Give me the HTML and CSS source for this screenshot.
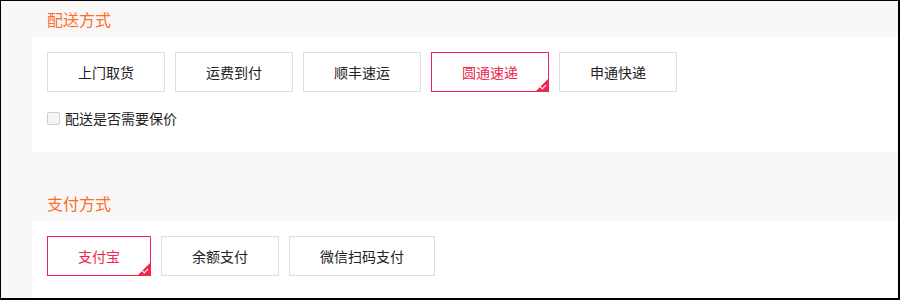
FILE: index.html
```html
<!DOCTYPE html>
<html lang="zh-CN">
<head>
  <meta charset="UTF-8">
  <title>配送与支付</title>
  <link rel="stylesheet" href="styles.css">
</head>
<body>
  <div class="page">
    <div class="section">
      <div class="section-title">配送方式</div>
      <div class="section-body">
        <div class="options">
          <div class="option">上门取货</div>
          <div class="option">运费到付</div>
          <div class="option">顺丰速运</div>
          <div class="option active">圆通速递</div>
          <div class="option">申通快递</div>
        </div>
        <label class="insure">
          <input type="checkbox">
          <span>配送是否需要保价</span>
        </label>
      </div>
    </div>

    <div class="section section-pay">
      <div class="section-title">支付方式</div>
      <div class="section-body">
        <div class="options">
          <div class="option active">支付宝</div>
          <div class="option">余额支付</div>
          <div class="option">微信扫码支付</div>
        </div>
      </div>
    </div>
  </div>
</body>
</html>
```

FILE: styles.css
```css
* {
  margin: 0;
  padding: 0;
  box-sizing: border-box;
}

html, body {
  height: 100%;
  background-color: #fff;
  font-family: "Noto Sans CJK SC", "Noto Sans", sans-serif;
  color: #333;
  overflow: hidden;
}

.page {
  width: 900px;
  height: 300px;
  border-style: solid;
  border-color: #000;
  border-width: 1px 2px 2px 1px;
  background-color: #f8f8f8;
  overflow: hidden;
}

.section-pay {
  margin-top: 33px;
}

.section-title {
  height: 36px;
  line-height: 36px;
  padding-left: 46px;
  font-size: 16px;
  color: #ff6d26;
}

.section-body {
  margin-left: 31px;
  background-color: #fff;
  padding: 15px 15px 24px;
}

.options {
  display: flex;
  gap: 10px;
}

.option {
  position: relative;
  height: 40px;
  line-height: 38px;
  padding: 0 30px;
  border: 1px solid #ddd;
  font-size: 14px;
  color: #222;
  white-space: nowrap;
  cursor: pointer;
  min-width: 104px;
  text-align: center;
}

.option.active {
  border-color: #f0264f;
  color: #f0264f;
}

.option.active::after {
  content: "";
  position: absolute;
  right: 0;
  bottom: 0;
  width: 0;
  height: 0;
  border-style: solid;
  border-width: 0 0 12px 12px;
  border-color: transparent transparent #f0264f transparent;
}

.option.active::before {
  content: "";
  position: absolute;
  right: 2px;
  bottom: 3px;
  width: 5px;
  height: 3px;
  border-left: 1.5px solid #fff;
  border-bottom: 1.5px solid #fff;
  transform: rotate(-45deg);
  z-index: 1;
}

.insure {
  display: flex;
  align-items: center;
  margin-top: 16px;
  height: 20px;
  font-size: 14px;
  color: #222;
}

.insure input {
  appearance: none;
  width: 13px;
  height: 13px;
  margin: 0 5px 0 0;
  border: 1px solid #cfcfcf;
  border-radius: 2px;
  background-color: #f4f4f4;
}
```
